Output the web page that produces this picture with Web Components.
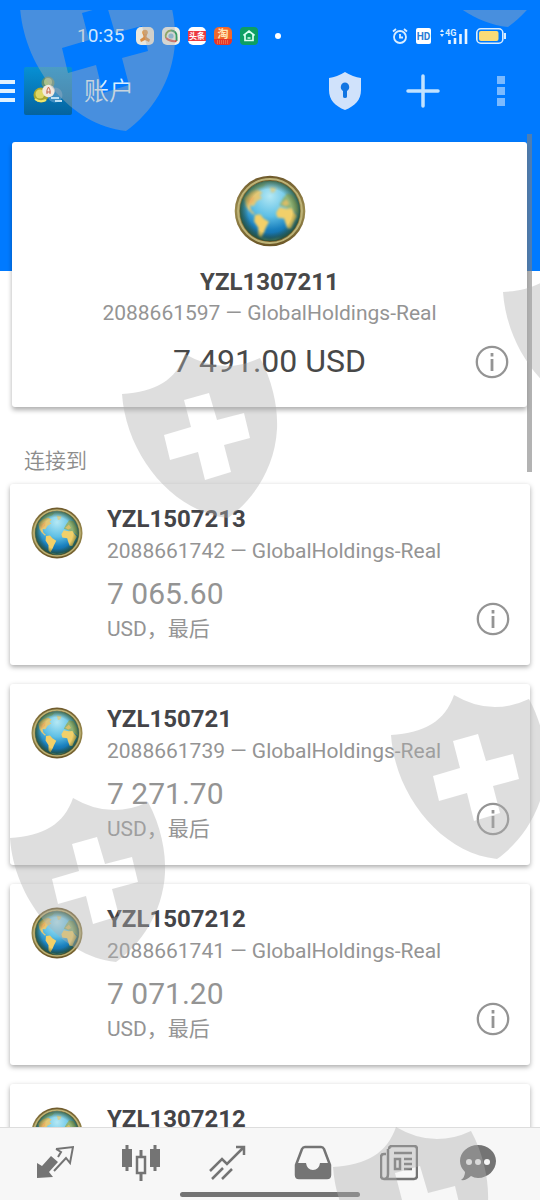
<!DOCTYPE html>
<html lang="zh-CN">
<head>
<meta charset="utf-8">
<meta name="viewport" content="width=device-width, initial-scale=1">
<title>账户</title>
<style>
html, body { margin: 0; height: 100%; }
body { font-family: Roboto, "Noto Sans CJK SC", sans-serif; background: #fff; }
</style>
</head>
<body>
<account-app></account-app>
<script>
const define = (name, html) => {
  const template = document.createElement('template');
  template.innerHTML = html;
  customElements.define(name, class extends HTMLElement {
    constructor() {
      super();
      this.attachShadow({ mode: 'open' }).append(template.content.cloneNode(true));
    }
  });
};

define('globe-logo', `
<style>
:host { display: block; width: 72px; height: 72px; }
svg { display: block; width: 100%; height: 100%; }
</style>
<svg viewBox="28 32 214 212" aria-hidden="true">
  <defs>
    <radialGradient id="sea" cx=".5" cy=".25" r=".75"><stop offset="0" stop-color="#b4e8f4"/><stop offset=".45" stop-color="#5fc0e6"/><stop offset=".75" stop-color="#1a80be"/><stop offset="1" stop-color="#0c5a90"/></radialGradient>
    <linearGradient id="rim" x1="0" y1="0" x2="0" y2="1"><stop offset="0" stop-color="#6f5a2c"/><stop offset=".5" stop-color="#9a8b4e"/><stop offset="1" stop-color="#6a5526"/></linearGradient>
    <radialGradient id="shade"><stop offset=".72" stop-color="#314d20" stop-opacity="0"/><stop offset="1" stop-color="#314d20" stop-opacity=".75"/></radialGradient>
    <clipPath id="disc"><circle cx="135" cy="138" r="88"/></clipPath>
    <filter id="soft"><feGaussianBlur stdDeviation="2.4"/></filter>
  </defs>
  <circle cx="135" cy="138" r="105" fill="url(#rim)"/>
  <circle cx="135" cy="138" r="95" fill="none" stroke="#bdb377" stroke-width="6"/>
  <circle cx="135" cy="138" r="89" fill="url(#sea)"/>
  <g clip-path="url(#disc)" filter="url(#soft)">
    <path d="M72 82L92 62 125 54 115 66 94 72 84 84Z" fill="#8cc5a0"/>
    <path d="M58 98L76 82 98 74 113 83 104 92 112 99 96 108 87 123 76 122 79 136 90 146 84 148 71 135 63 123Z" fill="#e2c876"/>
    <path d="M66 105L88 92 86 108 72 122Z" fill="#e9b264"/>
    <path d="M134 67L154 70 148 82 139 84Z" fill="#d3cf92"/>
    <path d="M90 150L106 148 116 160 132 170 123 187 118 200 108 218 100 210 100 188 88 169Z" fill="#f4d068"/>
    <path d="M163 121L173 102 185 86 202 90 218 117 222 150 207 139 190 130Z" fill="#8fb377"/>
    <path d="M169 116L184 103 193 117 181 124Z" fill="#d8bd69"/>
    <path d="M153 143L163 127 183 131 198 130 207 142 217 153 207 171 198 191 187 190 180 171 177 160 157 157Z" fill="#f2d06a"/>
    <path d="M108 218L135 224 172 217 150 230 118 228Z" fill="#60b4bb"/>
  </g>
  <circle cx="135" cy="138" r="90" fill="url(#shade)"/>
</svg>`);

define('info-button', `
<style>
:host { display: block; width: 34px; height: 34px; }
button { display: block; width: 100%; height: 100%; padding: 0; border: 0; background: none; cursor: pointer; }
svg { display: block; }
</style>
<button type="button" aria-label="账户信息"><svg width="34" height="34" viewBox="0 0 34 34" fill="none" stroke="#949494">
<circle cx="17" cy="17" r="15.2" stroke-width="2.3"/><path d="M17 14V26M17 8V11.500" stroke-width="2.8"/></svg></button>`);

define('status-bar', `
<style>
:host { display: flex; align-items: center; height: 48px; padding: 12px 34px 0 77px; color: #cfe8ff; }
time { font-size: 19px; line-height: 24px; width: 59px; }
.apps { display: flex; gap: 8px; flex: 1; align-items: center; }
.system { display: flex; gap: 8px; align-items: center; }
svg { display: block; flex: none; }
.dot { width: 6px; height: 6px; border-radius: 3px; background: #fff; margin-left: 9px; }
text { font-family: Roboto, "Noto Sans CJK SC", sans-serif; font-weight: 700; }
</style>
<time>10:35</time>
<div class="apps">
  <svg width="18" height="18"><rect width="18" height="18" rx="5" fill="#e9e7dd"/><circle cx="9" cy="5.5" r="2.8" fill="#e09a4b"/><path d="M7 7H11L10.500 10 14 12.500 13 15 9 13 5 15 4 12.500 7.500 10Z" fill="#d98d43"/></svg>
  <svg width="18" height="18" fill="none"><rect width="18" height="18" rx="5" fill="#eef0ea"/><path d="M4 11A5.500 5.500 0 0 1 9 3.500" stroke="#7aa03a" stroke-width="2"/><path d="M9 3.500A5.500 5.500 0 0 1 14.500 10V14" stroke="#3a9a63" stroke-width="2"/><path d="M4 11Q8 15 14.500 14" stroke="#d6534a" stroke-width="2"/><circle cx="9" cy="9" r="2.600" fill="#79b6d8"/></svg>
  <svg width="18" height="18"><rect width="18" height="18" rx="5" fill="#fff"/><path d="M0 4H18V14H0Z" fill="#ec3941"/><text x="9" y="12" font-size="8" text-anchor="middle" fill="#fff">头条</text></svg>
  <svg width="18" height="18"><rect width="18" height="18" rx="5" fill="#f2682c"/><path d="M0 12H18V13Q18 18 13 18H5Q0 18 0 13Z" fill="#e6352b"/><path d="M3 14H15M3 16H15" stroke="#f5a35f" stroke-dasharray="1 1"/><text x="9" y="11" font-size="11" text-anchor="middle" fill="#ffe6b8">淘</text></svg>
  <svg width="18" height="18"><rect width="18" height="18" rx="4" fill="#0d9f63"/><path d="M3.500 8.500L9 4 14.500 8.500M5 8V13.500H13V8M7.500 11H10.500" fill="none" stroke="#d9fff0" stroke-width="1.700"/></svg>
  <span class="dot"></span>
</div>
<div class="system">
  <svg width="16" height="18" fill="none" stroke="#d9edff" stroke-width="1.800"><circle cx="8" cy="10" r="6"/><path d="M8 7V10.500H11M1 4.500L4 2M15 4.500L12 2"/></svg>
  <svg width="16" height="16"><rect width="15" height="16" rx="2" fill="#fff"/><text x="7.500" y="12" font-size="10" text-anchor="middle" fill="#287bd4">HD</text></svg>
  <svg width="28" height="18"><path d="M0 5L2 2 4 5ZM0 7L2 10 4 7Z" fill="#d9edff"/><text x="5" y="9" font-size="9" fill="#d9edff">4G</text><path d="M9.500 13V17M15 11V17M20.500 7V17M26 2V17" stroke="#e8f4ff" stroke-width="2.600"/></svg>
  <svg width="30" height="16"><rect x=".800" y=".800" width="26" height="14.400" rx="4" fill="none" stroke="#d9edff" stroke-width="1.600"/><rect x="3" y="3" width="19.500" height="10" rx="2" fill="#fadb78"/><path d="M29 5V11" stroke="#d9edff" stroke-width="2"/></svg>
</div>`);

define('app-toolbar', `
<style>
:host { display: flex; align-items: center; height: 62px; color: #d8eeff; }
button { display: grid; place-items: center; padding: 0; border: 0; background: none; cursor: pointer; height: 62px; width: 78px; }
.menu { width: 24px; justify-items: start; }
h1 { flex: 1; margin: 0 0 0 12px; font-size: 25px; line-height: 32px; font-weight: 350; padding-top: 2px; }
svg { display: block; }
</style>
<button class="menu" type="button" aria-label="菜单"><svg width="15" height="22" fill="#dff2ff"><path d="M0 0H15V4H0ZM0 9H15V13H0ZM0 18H15V22H0Z"/></svg></button>
<svg width="48" height="48" viewBox="0 0 48 48" aria-hidden="true">
  <defs><linearGradient id="tile" x2="0" y2="1"><stop stop-color="#0790d4"/><stop offset="1" stop-color="#05639f"/></linearGradient></defs>
  <rect width="48" height="48" rx="2" fill="url(#tile)"/>
  <circle cx="24" cy="16" r="6.500" fill="#5f8f74"/><circle cx="24" cy="15" r="4" fill="#a7c08a"/>
  <circle cx="17" cy="28" r="7.500" fill="#a9a832"/><circle cx="16" cy="27" r="4.500" fill="#dfd764"/><path d="M11 32Q16 36 22 33" stroke="#f1e66c" stroke-width="2" fill="none"/>
  <circle cx="31" cy="28" r="7.500" fill="#3f8fc3"/><path d="M27 31H35M31 34H38" stroke="#bcdff3" stroke-width="2"/>
  <circle cx="24.500" cy="24" r="6.200" fill="#f3e9df"/><path d="M23 27V23L24.500 20 26 23V27M22.500 25H26.500" fill="none" stroke="#c56a50" stroke-width="1"/>
</svg>
<h1>账户</h1>
<button type="button" aria-label="安全"><svg width="32" height="38"><path d="M16 0Q24 5 32 6V18C32 28 26 34 16 38 6 34 0 28 0 18V6Q8 5 16 0Z" fill="#d0e2fb"/><path d="M16 10.500A4.600 4.600 0 0 1 18 19V24.500Q18 26 16 26T14 24.500V19A4.600 4.600 0 0 1 16 10.500Z" fill="#1175e2"/></svg></button>
<button type="button" aria-label="添加"><svg width="34" height="34"><path d="M17 2V32M2 17H32" stroke="#c1e2ff" stroke-width="3.500" stroke-linecap="round"/></svg></button>
<button type="button" aria-label="更多"><svg width="8" height="30"><path d="M0 0H8V8H0ZM0 11H8V19H0ZM0 22H8V30H0Z" fill="#7bbaff"/></svg></button>`);

define('main-account', `
<style>
:host { display: flex; flex-direction: column; align-items: center; position: relative; margin: 0 13px 0 12px; padding: 33px 0 26px; border-radius: 3px; background: #fff; box-shadow: 0 3px 5px rgba(0,0,0,.32); color: #484848; }
h2 { margin: 20px 0 0; font-size: 24px; line-height: 30px; font-weight: 700; }
p { margin: 0; }
.server { font-size: 21px; line-height: 32px; color: #949494; }
.balance { margin-top: 12px; font-size: 32px; line-height: 40px; }
info-button { position: absolute; right: 18px; bottom: 28px; }
</style>
<globe-logo></globe-logo>
<h2><slot name="name"></slot></h2>
<p class="server"><slot name="server"></slot></p>
<p class="balance"><slot name="balance"></slot></p>
<info-button></info-button>`);

define('account-card', `
<style>
:host { display: flex; align-items: flex-start; margin: 0 10px; padding: 20px 20px 21px 21px; border-radius: 3px; background: #fff; box-shadow: 0 2px 5px rgba(0,0,0,.34); }
globe-logo { width: 52px; height: 52px; margin-top: 3px; }
.text { flex: 1; margin-left: 24px; color: #949494; }
h2, p { margin: 0; }
h2 { font-size: 24px; line-height: 30px; font-weight: 700; color: #444448; }
.server { font-size: 21px; line-height: 34px; min-height: 34px; }
.balance { margin-top: 6px; font-size: 30px; line-height: 40px; min-height: 40px; }
.currency { font-size: 21px; line-height: 30px; min-height: 30px; }
info-button { align-self: flex-end; margin-bottom: 8px; }
</style>
<globe-logo></globe-logo>
<div class="text">
  <h2><slot name="name"></slot></h2>
  <p class="server"><slot name="server"></slot></p>
  <p class="balance"><slot name="balance"></slot></p>
  <p class="currency"><slot name="currency"></slot></p>
</div>
<info-button></info-button>`);

define('bottom-nav', `
<style>
:host { display: block; position: relative; background: #f7f7f7; border-top: 1px solid #ddd; }
nav { display: grid; grid-template-columns: repeat(5, 86fr) 72fr; padding: 0 26px 0 12px; height: 72px; box-sizing: border-box; }
a { display: grid; place-items: center; height: 70px; color: #747474; }
svg { display: block; fill: none; stroke: currentColor; stroke-width: 2.5; }
.home { position: absolute; bottom: 3px; left: 33.333%; right: 33.333%; height: 5px; border-radius: 3px; background: #747474; }
</style>
<nav aria-label="主导航">
  <a href="#quotes" aria-label="行情"><svg width="38" height="36"><path d="M20 4L37 2 34 18 30 13 18 26M20 4L25 7 22 12" stroke-width="2"/><path d="M15 11L22 17 13 27 17 32 1 33 1 18 6 21Z" fill="currentColor" stroke="none"/></svg></a>
  <a href="#charts" aria-label="图表"><svg width="38" height="36"><path d="M0 4H10V22H0ZM28 4H38V22H28Z" fill="currentColor" stroke="none"/><path d="M5 0V26M33 0V26M19 5V11M19 29V36" stroke-width="3"/><rect x="15" y="12" width="8" height="16"/></svg></a>
  <a href="#trade" aria-label="交易"><svg width="38" height="36"><path d="M2 26L14 14 19 19 35 3M28 2H36V10M4 34L15 23M14 34L24 24"/></svg></a>
  <a href="#history" aria-label="历史"><svg width="38" height="36"><path d="M2 20L8 4Q9 2 11 2H27Q29 2 30 4L36 20V30Q36 33 33 33H5Q2 33 2 30Z"/><path d="M2 18H12Q13 25 19 25T26 18H36V31Q36 34 33 34H5Q2 34 2 31Z" fill="currentColor" stroke="none"/></svg></a>
  <a href="#news" aria-label="新闻"><svg width="38" height="36"><path d="M9 4Q9 1 12 1H34Q37 1 37 4V31Q37 34 34 34H4Q1 34 1 31V12Q1 9 4 9H6M8 4V29Q8 34 4 34M14 8H32M24 14H32M24 19H32M24 24H32"/><rect x="15" y="14" width="5" height="10"/></svg></a>
  <a href="#messages" aria-label="消息"><svg width="36" height="36"><path d="M18 0C28 0 36 7 36 16S28 33 18 33Q14 33 11 31 6 36 1 35 5 32 5 27 0 22 0 16C0 7 8 0 18 0Z" fill="currentColor" stroke="none"/><g fill="#f7f7f7" stroke="none"><circle cx="9" cy="17" r="3"/><circle cx="18" cy="17" r="3"/><circle cx="27" cy="17" r="3"/></g></svg></a>
</nav>
<div class="home"></div>`);

define('shield-marks', `
<style>
:host { position: absolute; inset: 0; pointer-events: none; overflow: hidden; }
svg { display: block; width: 100%; height: 100%; }
</style>
<svg aria-hidden="true">
  <defs>
    <path id="shield" fill="#b0b0b0" fill-opacity=".41" fill-rule="evenodd" d="M0 0C34 -2 54 -14 63 -40 Q100 -18 138 -36C151 -12 156 14 155 35C153 75 130 107 106 124C50 118 4 60 0 0ZM62 6L69 33 42 41 48 66 76 58 83 86 109 78 102 51 128 44 122 19 95 26 87 -1Z"/>
    <clipPath id="below"><rect y="10" width="2000" height="4000"/></clipPath>
  </defs>
  <g clip-path="url(#below)"><use href="#shield" x="20" y="7"/><use href="#shield" x="402" y="-97"/></g>
  <use href="#shield" x="122" y="394"/><use href="#shield" x="503" y="292"/>
  <use href="#shield" x="391" y="735"/><use href="#shield" x="10" y="838"/><use href="#shield" x="333" y="1167"/>
</svg>`);

define('account-app', `
<style>
:host { display: flex; flex-direction: column; position: relative; height: 100vh; overflow: hidden; }
header { background: #007aff; }
main { flex: 1; min-height: 0; overflow: hidden; position: relative; padding-top: 20px; background: linear-gradient(#007aff 149px, #fff 149px); }
h3 { margin: 39px 24px 8px; font-size: 21px; line-height: 30px; font-weight: 350; color: #8c8c8c; }
.list { display: grid; gap: 19px; }
.thumb { position: absolute; top: 12px; right: 8px; width: 5px; height: 338px; background: rgba(128,128,128,.6); }
</style>
<header><status-bar></status-bar><app-toolbar></app-toolbar></header>
<main>
  <main-account><span slot="name">YZL1307211</span><span slot="server">2088661597 — GlobalHoldings-Real</span><span slot="balance">7 491.00 USD</span></main-account>
  <h3>连接到</h3>
  <div class="list">
    <account-card><span slot="name">YZL1507213</span><span slot="server">2088661742 — GlobalHoldings-Real</span><span slot="balance">7 065.60</span><span slot="currency">USD，最后</span></account-card>
    <account-card><span slot="name">YZL150721</span><span slot="server">2088661739 — GlobalHoldings-Real</span><span slot="balance">7 271.70</span><span slot="currency">USD，最后</span></account-card>
    <account-card><span slot="name">YZL1507212</span><span slot="server">2088661741 — GlobalHoldings-Real</span><span slot="balance">7 071.20</span><span slot="currency">USD，最后</span></account-card>
    <account-card><span slot="name">YZL1307212</span></account-card>
  </div>
  <div class="thumb"></div>
</main>
<bottom-nav></bottom-nav>
<shield-marks></shield-marks>`);
</script>
</body>
</html>
